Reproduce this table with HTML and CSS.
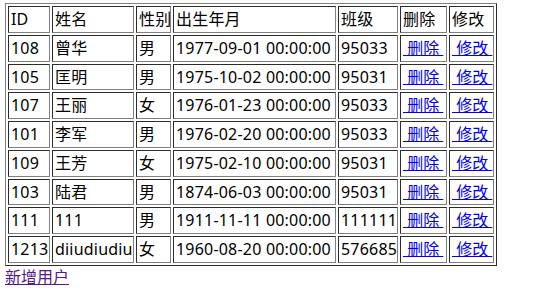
FILE: index.html
```html
<!DOCTYPE html>
<html lang="zh-CN">
<head>
<meta charset="utf-8">
<title>用户列表</title>
<link rel="stylesheet" href="styles.css">
</head>
<body>
<table class="users">
  <colgroup>
    <col class="c-id"><col class="c-name"><col class="c-sex"><col class="c-birth"><col class="c-class"><col class="c-del"><col class="c-edit">
  </colgroup>
  <tr><td>ID</td><td>姓名</td><td>性别</td><td>出生年月</td><td>班级</td><td>删除</td><td>修改</td></tr>
  <tr><td>108</td><td>曾华</td><td>男</td><td>1977-09-01 00:00:00</td><td>95033</td><td><a class="act" href="#">&nbsp;删除&nbsp;</a></td><td><a class="act" href="#">&nbsp;修改&nbsp;</a></td></tr>
  <tr><td>105</td><td>匡明</td><td>男</td><td>1975-10-02 00:00:00</td><td>95031</td><td><a class="act" href="#">&nbsp;删除&nbsp;</a></td><td><a class="act" href="#">&nbsp;修改&nbsp;</a></td></tr>
  <tr><td>107</td><td>王丽</td><td>女</td><td>1976-01-23 00:00:00</td><td>95033</td><td><a class="act" href="#">&nbsp;删除&nbsp;</a></td><td><a class="act" href="#">&nbsp;修改&nbsp;</a></td></tr>
  <tr><td>101</td><td>李军</td><td>男</td><td>1976-02-20 00:00:00</td><td>95033</td><td><a class="act" href="#">&nbsp;删除&nbsp;</a></td><td><a class="act" href="#">&nbsp;修改&nbsp;</a></td></tr>
  <tr><td>109</td><td>王芳</td><td>女</td><td>1975-02-10 00:00:00</td><td>95031</td><td><a class="act" href="#">&nbsp;删除&nbsp;</a></td><td><a class="act" href="#">&nbsp;修改&nbsp;</a></td></tr>
  <tr><td>103</td><td>陆君</td><td>男</td><td>1874-06-03 00:00:00</td><td>95031</td><td><a class="act" href="#">&nbsp;删除&nbsp;</a></td><td><a class="act" href="#">&nbsp;修改&nbsp;</a></td></tr>
  <tr><td>111</td><td>111</td><td>男</td><td>1911-11-11 00:00:00</td><td>111111</td><td><a class="act" href="#">&nbsp;删除&nbsp;</a></td><td><a class="act" href="#">&nbsp;修改&nbsp;</a></td></tr>
  <tr><td>1213</td><td>diiudiudiu</td><td>女</td><td>1960-08-20 00:00:00</td><td>576685</td><td><a class="act" href="#">&nbsp;删除&nbsp;</a></td><td><a class="act" href="#">&nbsp;修改&nbsp;</a></td></tr>
</table>
<a class="add" href="#">新增用户</a>
</body>
</html>
```
FILE: styles.css
```css
html, body {
  background: #ffffff;
}
body {
  margin: 3px 5px;
  font-family: "Noto Sans", "Noto Sans CJK SC", sans-serif;
  font-size: 16px;
  font-weight: 400;
  line-height: 22.75px;
  color: #000000;
}
.users {
  table-layout: fixed;
  width: 492px;
  border-collapse: separate;
  border-spacing: 2px;
  border: 1px outset #808080;
}
.users td {
  box-sizing: border-box;
  border: 1px inset #808080;
  padding: 1px 1px 1px 2px;
  white-space: nowrap;
  overflow: hidden;
  vertical-align: middle;
  letter-spacing: 0.2px;
}
.c-id { width: 42px; }
.c-name { width: 82px; }
.c-sex { width: 35px; }
.c-birth { width: 163px; }
.c-class { width: 60px; }
.c-del { width: 47px; }
.c-edit { width: 45px; }
.act {
  color: #0000ee;
  text-decoration: underline;
  letter-spacing: 0;
}
.add {
  display: inline-block;
  color: #551a8b;
  text-decoration: underline;
}
```
